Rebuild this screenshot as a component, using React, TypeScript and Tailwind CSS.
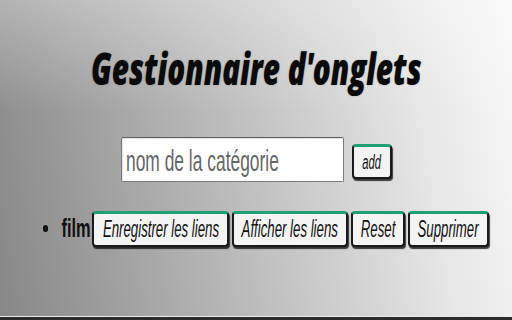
const buttons = [
  { label: "Enregistrer les liens", width: "w-[137px]" },
  { label: "Afficher les liens", width: "w-[116px]" },
  { label: "Reset", width: "w-[54px]" },
  { label: "Supprimer", width: "w-[81px]" },
];

function SqueezedButton({ label, width, className = "" }: { label: string; width: string; className?: string }) {
  return (
    <button
      type="button"
      className={`${width} h-[36px] flex items-center justify-center rounded-[4px] border-2 border-[#1a1a1a] border-t-[3px] border-t-[#1f9f76] bg-[#f4f4f4] shadow-[1px_2px_1px_rgba(0,0,0,0.75)] font-['Liberation_Sans',Arial,sans-serif] text-[23px] italic text-[#111] ${className}`}
    >
      <span className="inline-block scale-x-[0.575] whitespace-nowrap">{label}</span>
    </button>
  );
}

export default function App() {
  return (
    <div className="w-[512px] h-[320px] overflow-hidden flex flex-col bg-[linear-gradient(180deg,rgba(255,255,255,0.3)_0%,rgba(255,255,255,0)_35%),linear-gradient(80deg,#878787_0%,#a4a4a4_25%,#c8c8c8_55%,#e6e6e6_80%,#f9f9f9_100%)]">
      <div className="flex-1 flex flex-col items-center">
        <h1 className="pt-[41px] w-[332px] h-[95px] flex justify-center font-['Open_Sans',sans-serif] text-[45px] leading-[54px] font-extrabold italic text-[#0b0b0b] [text-shadow:0_0_2px_rgba(0,0,0,0.3)]">
          <span className="inline-block scale-x-[0.66] whitespace-nowrap">Gestionnaire d'onglets</span>
        </h1>

        <div className="mt-[42px] flex items-start gap-2">
          <div className="w-[223px] h-[45px] overflow-hidden border border-[#7a7a7a] border-t-[#5e5e5e] bg-white rounded-[2px] shadow-[inset_1px_1px_1px_rgba(0,0,0,0.12)] pt-[2px] pl-[4px] font-['Liberation_Sans',Arial,sans-serif] text-[29px] text-[#666]">
            <span className="inline-block origin-left scale-x-[0.6] whitespace-nowrap">nom de la catégorie</span>
          </div>
          <button
            type="button"
            className="mt-[7px] w-[40px] h-[35px] flex items-center justify-center rounded-[4px] border-2 border-[#1a1a1a] border-t-[3px] border-t-[#1f9f76] bg-[#f4f4f4] shadow-[1px_2px_1px_rgba(0,0,0,0.75)] font-['Liberation_Sans',Arial,sans-serif] text-[20px] italic text-[#111]"
          >
            <span className="inline-block scale-x-[0.56]">add</span>
          </button>
        </div>

        <ul className="mt-[27px] self-stretch pl-[43px] flex items-center">
          <li className="w-[5px] h-[7px] rounded-full bg-[#111]" aria-hidden="true" />
          <li className="ml-[14px] w-[29px] flex justify-center font-['Liberation_Sans',Arial,sans-serif] text-[26px] font-bold text-[#111]">
            <span className="inline-block scale-x-[0.63]">film</span>
          </li>
          <li className="ml-px flex gap-[3px]">
            {buttons.map((b) => (
              <SqueezedButton key={b.label} label={b.label} width={b.width} />
            ))}
          </li>
        </ul>
      </div>
      <div className="h-px bg-[#e8e8e8]" />
      <div className="h-[3px] bg-[#2c2c2c]" />
    </div>
  );
}
